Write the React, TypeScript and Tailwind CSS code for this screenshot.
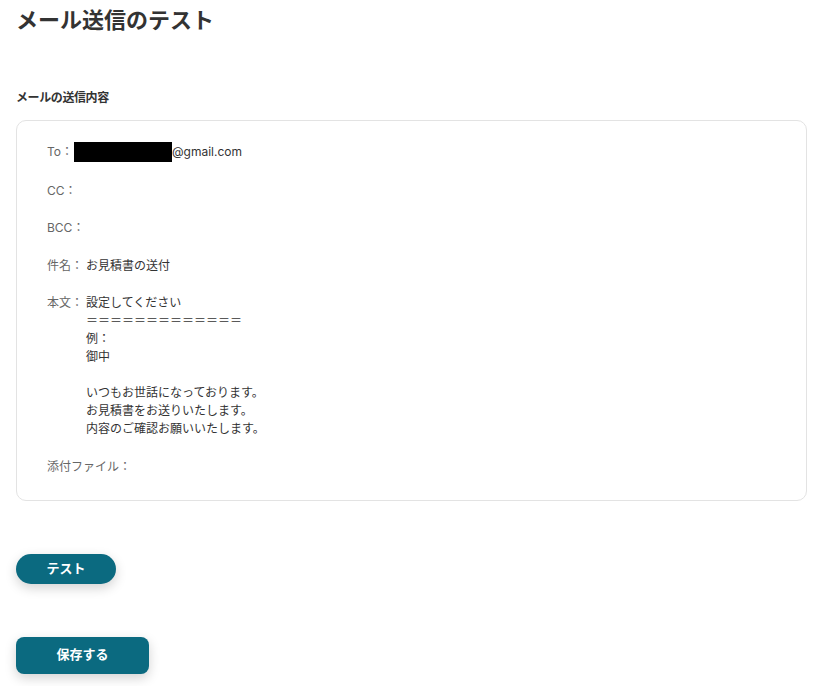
import React from "react";

const font = { fontFamily: 'Inter, "Noto Sans CJK JP", sans-serif' };

function Row({ label, children, h = "leading-[18px]" }: { label: string; children?: React.ReactNode; h?: string }) {
  return (
    <div className={`flex items-start ${h}`}>
      <div className="w-[39px] shrink-0 whitespace-nowrap text-[#666] text-[12px]">{label}</div>
      <div className="text-[#333] text-[12px]">{children}</div>
    </div>
  );
}

export default function App() {
  const body = [
    "設定してください",
    "＝＝＝＝＝＝＝＝＝＝＝＝＝",
    "例：",
    "御中",
    "",
    "いつもお世話になっております。",
    "お見積書をお送りいたします。",
    "内容のご確認お願いいたします。",
  ];
  return (
    <div className="bg-white w-[832px] h-[686px] overflow-hidden" style={font}>
      <div className="pl-4 pr-[25px] pt-1">
        <h1 className="text-[22px] font-bold leading-[32px] text-[#333]">メール送信のテスト</h1>
        <div className="mt-[53px] text-[12px] font-bold leading-[18px] text-[#333] tracking-[-0.4px]">メールの送信内容</div>
        <div className="mt-[13px] rounded-[10px] border border-[#e3e3e3] pl-[30px] pt-[21px] pb-[24px] flex flex-col gap-[19.5px]">
          <div className="flex items-center leading-[20px]">
            <div className="w-[27px] shrink-0 text-[#666] text-[12px]">To：</div>
            <div className="flex items-center text-[#333] text-[12px]">
              <span className="inline-block w-[98px] h-[20px] bg-black" />
              <span>@gmail.com</span>
            </div>
          </div>
          <Row label="CC：" />
          <Row label="BCC：" />
          <Row label="件名：">お見積書の送付</Row>
          <Row label="本文：">
            {body.map((l, i) => (
              <div key={i} className="h-[18px] whitespace-pre">{l}</div>
            ))}
          </Row>
          <Row label="添付ファイル：" />
        </div>
        <button className="mt-[53px] block w-[100px] h-[30px] rounded-full bg-[#0b6a80] text-white text-[13px] font-bold shadow-[0_4px_12px_rgba(0,0,0,0.18)]">
          テスト
        </button>
        <button className="mt-[53px] block w-[133px] h-[37px] rounded-[8px] bg-[#0b6a80] text-white text-[13px] font-bold shadow-[0_4px_12px_rgba(0,0,0,0.18)]">
          保存する
        </button>
      </div>
    </div>
  );
}
